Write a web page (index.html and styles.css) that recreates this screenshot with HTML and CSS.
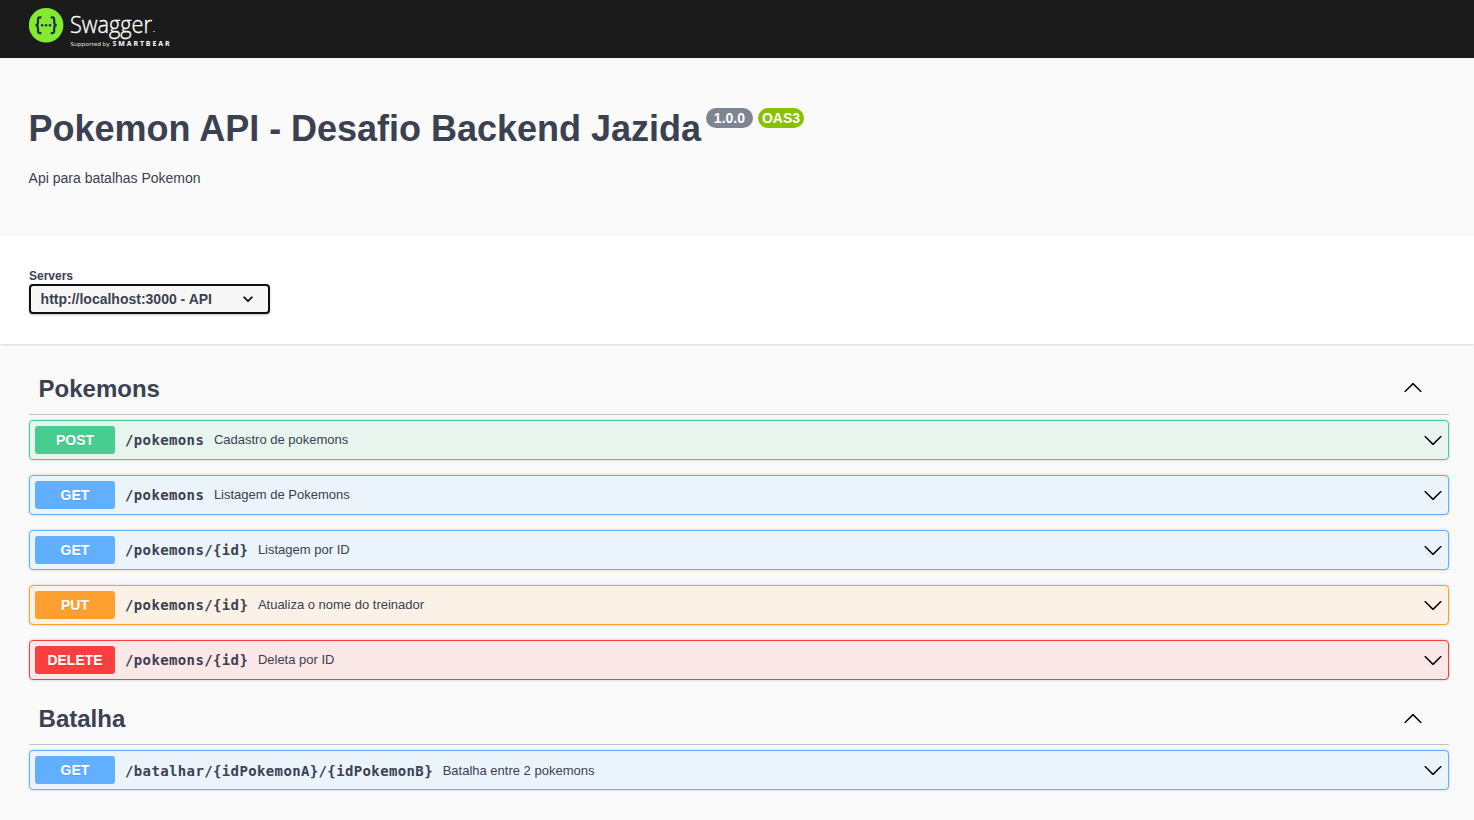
FILE: index.html
```html
<!DOCTYPE html>
<html lang="pt-BR">
<head>
<meta charset="utf-8">
<title>Swagger UI</title>
<link rel="stylesheet" href="styles.css">
</head>
<body>
<svg class="sprite" aria-hidden="true">
  <symbol id="chevron" viewBox="0 0 20 20"><path d="M17.418 6.109c.272-.268.709-.268.979 0s.271.701 0 .969l-7.908 7.83c-.27.268-.707.268-.979 0l-7.908-7.83c-.27-.268-.27-.701 0-.969.271-.268.709-.268.979 0L10 13.25l7.418-7.141z"/></symbol>
</svg>
<header class="topbar">
  <svg class="logo" width="150" height="48" viewBox="0 0 150 48">
    <circle cx="17.1" cy="25.2" r="17.3" fill="#85ea2d"/>
    <g fill="none" stroke="#173647" stroke-width="2.2">
      <path d="M12.400 17.3h-1.4q-2 0-2 2v2.900q0 3-2.500 3q2.500 0 2.500 3v2.900q0 2 2 2h1.400"/>
      <path d="M21.800 17.3h1.400q2 0 2 2v2.900q0 3 2.500 3q-2.500 0-2.500 3v2.900q0 2-2 2h-1.400"/>
    </g>
    <g fill="#173647"><circle cx="13.2" cy="25.200" r="1.300"/><circle cx="17.100" cy="25.200" r="1.300"/><circle cx="21" cy="25.200" r="1.300"/></g>
    <text class="logo-name" x="41" y="33" textLength="82" lengthAdjust="spacingAndGlyphs">Swagger</text>
    <rect x="124" y="31" width="2" height="1" fill="#999"/>
    <text class="logo-by" x="41.500" y="46" textLength="39" lengthAdjust="spacingAndGlyphs">Supported by</text>
    <text class="logo-brand" x="83.500" y="46" textLength="57">SMARTBEAR</text>
  </svg>
</header>
<section class="info">
  <h1 class="title">Pokemon API - Desafio Backend Jazida</h1>
  <span class="badge version">1.0.0</span>
  <span class="badge oas">OAS3</span>
  <p class="description">Api para batalhas Pokemon</p>
</section>
<section class="servers">
  <span class="servers-label">Servers</span>
  <div class="select"><span>http://localhost:3000 - API</span><svg width="20" height="20" viewBox="0 0 20 20"><path d="M13.418 7.859a.695.695 0 0 1 .978 0 .68.68 0 0 1 0 .969l-3.908 3.830a.697.697 0 0 1-.979 0l-3.908-3.830a.68.68 0 0 1 0-.969.695.695 0 0 1 .978 0L10 11z" stroke="#000" stroke-width=".3"/></svg></div>
</section>
<main class="operations">
  <section>
    <h2 class="tag"><span>Pokemons</span><svg class="up raised"><use href="#chevron"/></svg></h2>
    <div class="op post"><b class="method">POST</b><span class="path">/pokemons</span><span class="summary">Cadastro de pokemons</span><svg><use href="#chevron"/></svg></div>
    <div class="op get"><b class="method">GET</b><span class="path">/pokemons</span><span class="summary">Listagem de Pokemons</span><svg><use href="#chevron"/></svg></div>
    <div class="op get"><b class="method">GET</b><span class="path">/pokemons/{id}</span><span class="summary">Listagem por ID</span><svg><use href="#chevron"/></svg></div>
    <div class="op put"><b class="method">PUT</b><span class="path">/pokemons/{id}</span><span class="summary">Atualiza o nome do treinador</span><svg><use href="#chevron"/></svg></div>
    <div class="op delete"><b class="method">DELETE</b><span class="path">/pokemons/{id}</span><span class="summary">Deleta por ID</span><svg><use href="#chevron"/></svg></div>
  </section>
  <section class="battle">
    <h2 class="tag"><span>Batalha</span><svg class="up"><use href="#chevron"/></svg></h2>
    <div class="op get"><b class="method">GET</b><span class="path">/batalhar/{idPokemonA}/{idPokemonB}</span><span class="summary">Batalha entre 2 pokemons</span><svg><use href="#chevron"/></svg></div>
  </section>
</main>
</body>
</html>
```

FILE: styles.css
```css
* { box-sizing: border-box; }
html { overflow: hidden; }
body { margin: 0; height: 820px; background: #fafafa; color: #3b4151; font-family: "Liberation Sans", Arial, sans-serif; }
.sprite { display: none; }
.topbar { height: 58px; background: #1b1b1b; padding-left: 29px; }
.logo { display: block; }
.logo-name { font: 300 24px "Open Sans", sans-serif; fill: #fff; stroke: #fff; stroke-width: .35px; }
.logo-by { font: 6px "Open Sans", sans-serif; fill: #eee; }
.logo-brand { font: 700 7px "Open Sans", sans-serif; fill: #fff; }
.info { height: 178px; padding: 50px 28.6px 0; display: grid; grid-template-columns: auto auto auto; justify-content: start; align-content: start; align-items: start; }
.title { margin: 0; font-size: 36px; line-height: 41px; letter-spacing: -.015px; white-space: nowrap; }
.badge { height: 20px; border-radius: 20px; color: #fff; font-size: 14px; font-weight: bold; line-height: 20px; text-align: center; }
.version { width: 47px; margin-left: 5px; background: #7d8492; }
.oas { width: 46px; margin-left: 5px; background: #89bf04; }
.description { grid-column: 1 / -1; margin: 21px 0 0; font-size: 14px; line-height: 16px; }
.servers { height: 108px; padding: 33px 29px 0; background: #fff; box-shadow: 0 1px 2px rgba(0,0,0,.15); }
.servers-label { display: block; font-size: 12px; font-weight: bold; line-height: 14px; height: 15px; }
.select { display: flex; align-items: center; justify-content: space-between; width: 241px; height: 30px; padding: 0 10px 0 9.600px; border: 2px solid #101010; border-radius: 4px; background: #f7f7f7; box-shadow: 0 1px 2px rgba(0,0,0,.25); font-size: 14px; font-weight: bold; }
.operations { padding: 21px 25px 0 29px; }
.tag { display: flex; align-items: center; justify-content: space-between; height: 50px; margin: 0 0 5px; padding: 0 26px 1px 9.600px; border-bottom: 1px solid rgba(59,65,81,.3); font-size: 24px; }
.tag svg, .op svg { width: 20px; height: 20px; }
.up { transform: rotate(180deg); }
.raised { margin-bottom: 2px; }
.op { display: flex; align-items: center; height: 40px; margin-bottom: 15px; padding: 0 5px; border: 1px solid var(--c); border-radius: 4px; background: var(--bg); box-shadow: 0 0 3px rgba(0,0,0,.19); }
.op svg { margin-left: auto; }
.method { width: 80px; height: 28px; border-radius: 3px; background: var(--c); color: #fff; font-size: 14px; line-height: 28px; text-align: center; text-shadow: 0 1px 0 rgba(0,0,0,.1); }
.path { padding: 0 9.700px 1px 10px; font: bold 14px/16px "DejaVu Sans Mono", monospace; letter-spacing: .37px; }
.summary { font-size: 13px; line-height: 15px; margin-top: -1px; }
.battle .path { padding-top: 1px; padding-bottom: 0; }
.battle .summary { margin-top: 1px; }
.post { --c: #49cc90; --bg: #e8f5ef; }
.get { --c: #61affe; --bg: #ebf3fb; }
.put { --c: #fca130; --bg: #fbf1e6; }
.delete { --c: #f93e3e; --bg: #fae7e7; }
```
